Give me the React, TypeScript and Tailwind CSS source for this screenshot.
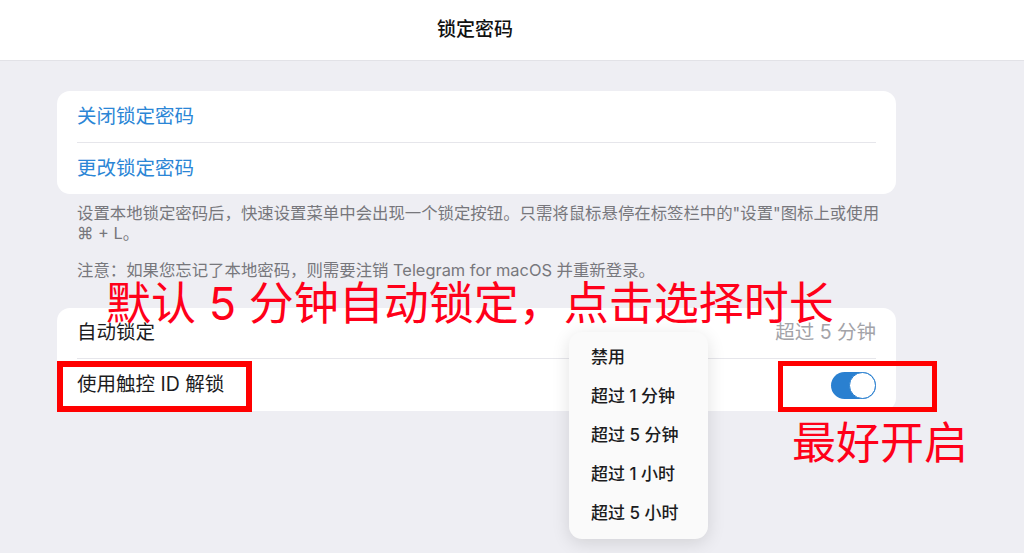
import React from 'react';

const font = { fontFamily: 'Inter, "Noto Sans CJK SC", "DejaVu Sans", sans-serif' };

const options = ['禁用', '超过 1 分钟', '超过 5 分钟', '超过 1 小时', '超过 5 小时'];

function Toggle() {
  return (
    <div className="relative h-[27px] w-[45px] rounded-full bg-[#2a80d0]">
      <div className="absolute right-0 top-0 h-[27px] w-[27px] rounded-full border border-[#2a80d0] bg-white" />
    </div>
  );
}

export default function App() {
  return (
    <div className="relative h-[553px] w-[1024px] overflow-hidden bg-[#eeeef3]" style={font}>
      {/* Header */}
      <header className="flex h-[61px] items-center justify-center border-b border-[#e2e2e7] bg-white pr-[74px]">
        <span className="text-[19px] font-medium text-[#111]">锁定密码</span>
      </header>

      <main className="ml-[57px] w-[839px] pt-[30px]">
        {/* Passcode card */}
        <div className="rounded-[13px] bg-white px-[20px]">
          <div className="flex h-[51px] items-center text-[19.5px] text-[#2b86d6]">关闭锁定密码</div>
          <div className="h-px bg-[#e6e6eb]" />
          <div className="flex h-[51px] items-center text-[19.5px] text-[#2b86d6]">更改锁定密码</div>
        </div>

        <div className="px-[20px] pt-[9px] text-[16.4px] leading-[20px] text-[#77777c]">
          <p className="whitespace-nowrap">
            设置本地锁定密码后，快速设置菜单中会出现一个锁定按钮。只需将鼠标悬停在标签栏中的"设置"图标上或使用
            <br />
            ⌘ + L。
          </p>
          <p className="mt-[17px]">注意：如果您忘记了本地密码，则需要注销 Telegram for macOS 并重新登录。</p>
        </div>

        {/* Auto-lock card */}
        <div className="mt-[28px] rounded-[13px] bg-white px-[20px]">
          <div className="flex h-[50px] items-center justify-between text-[19.5px]">
            <span className="text-[#1c1c1e]">自动锁定</span>
            <span className="text-[#a3a3a8]">超过 5 分钟</span>
          </div>
          <div className="h-px bg-[#e6e6eb]" />
          <div className="flex h-[52px] items-center justify-between text-[19.5px]">
            <span className="text-[#1c1c1e]">使用触控 ID 解锁</span>
            <Toggle />
          </div>
        </div>
      </main>

      {/* Dropdown menu */}
      <div className="absolute left-[569px] top-[332px] w-[139px] rounded-[13px] bg-[#fafafa] py-[6px] shadow-[0_4px_18px_rgba(0,0,0,0.12)]">
        {options.map((o) => (
          <div key={o} className="flex h-[39px] items-center pl-[22px] text-[17px] font-medium text-[#1c1c1e]">
            {o}
          </div>
        ))}
      </div>

      {/* Annotations */}
      <div className="absolute left-[106px] top-[276px] text-[45px] leading-[56px] text-[#ff0019]">
        默认 5 分钟自动锁定，点击选择时长
      </div>
      <div className="absolute left-[57px] top-[361px] h-[51px] w-[195px] border-[6px] border-[#ff0000]" />
      <div className="absolute left-[778px] top-[361px] h-[51px] w-[159px] border-[5px] border-[#ff0000]" />
      <div className="absolute left-[792px] top-[416px] text-[44px] leading-[54px] text-[#ff0019]">最好开启</div>
    </div>
  );
}
